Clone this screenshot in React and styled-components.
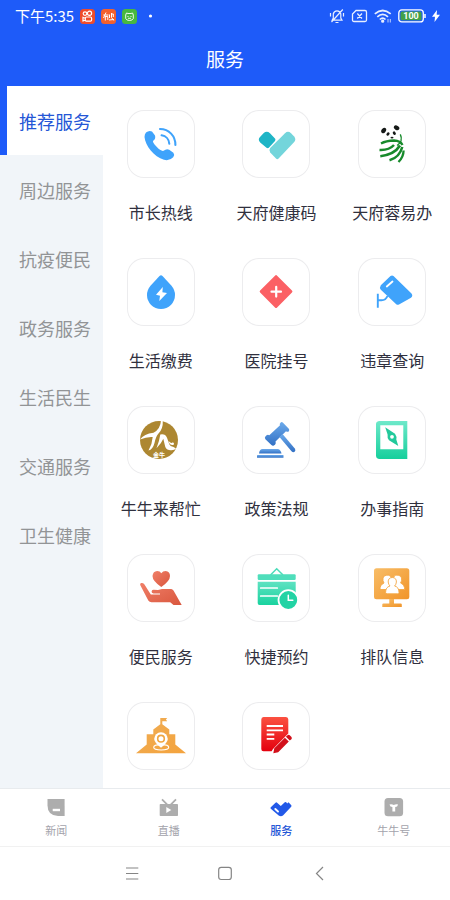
import React from "react";
import styled, { createGlobalStyle } from "styled-components";

const GlobalStyle = createGlobalStyle`
  *, *::before, *::after { box-sizing: border-box; }
  body {
    margin: 0;
    font-family: "Noto Sans CJK SC", "Noto Sans", sans-serif;
    background: #fff;
  }
  button { font: inherit; border: 0; background: none; padding: 0; cursor: pointer; }
  svg { display: block; flex-shrink: 0; }
`;

const Screen = styled.div`
  display: flex;
  flex-direction: column;
  height: 100vh;
  background: #fff;
`;

const Header = styled.header`
  flex-shrink: 0;
  background: #1e5bf9;
  color: #fff;
`;

const StatusBar = styled.div`
  display: flex;
  align-items: center;
  justify-content: space-between;
  height: 32px;
  padding: 0 10px 0 15px;
`;

const StatusGroup = styled.div`
  display: flex;
  align-items: center;
  gap: ${(p) => p.$gap}px;
`;

const Clock = styled.time`
  font-size: 15px;
  line-height: 20px;
`;

const Title = styled.h1`
  margin: 0;
  padding: 13px 0;
  text-align: center;
  font-size: 19px;
  line-height: 28px;
  font-weight: 400;
`;

const Body = styled.div`
  display: flex;
  flex: 1;
  min-height: 0;
`;

const Sidebar = styled.nav`
  width: 103px;
  flex-shrink: 0;
  background: #f1f5f9;
`;

const Category = styled.button`
  display: block;
  width: 100%;
  height: 69px;
  border-left: 7px solid ${(p) => (p.$active ? "#1e5bf9" : "transparent")};
  padding-left: 12px;
  text-align: left;
  white-space: nowrap;
  font-size: 18px;
  line-height: 26px;
  color: ${(p) => (p.$active ? "#2456d6" : "#929496")};
  background: ${(p) => (p.$active ? "#fff" : "transparent")};
`;

const Grid = styled.main`
  flex: 1;
  display: grid;
  grid-template-columns: repeat(3, 1fr);
  grid-auto-rows: 148px;
  padding-top: 24px;
  overflow-y: auto;
  scrollbar-width: none;
`;

const Service = styled.button`
  display: flex;
  flex-direction: column;
  align-items: center;
  gap: 22px;
`;

const Tile = styled.span`
  border-radius: 17px;
  box-shadow: inset 0 0 0 1px #ececee;
`;

const ServiceName = styled.span`
  font-size: 16px;
  line-height: 24px;
  color: #30303e;
  white-space: nowrap;
`;

const TabBar = styled.nav`
  display: grid;
  grid-template-columns: repeat(4, 1fr);
  flex-shrink: 0;
  border-top: 1px solid #e8ebee;
`;

const Tab = styled.button`
  display: flex;
  flex-direction: column;
  align-items: center;
  padding: 7px 0 6px;
  font-size: 11px;
  line-height: 20px;
  font-weight: ${(p) => (p.$active ? 500 : 400)};
  color: ${(p) => (p.$active ? "#2456d6" : "#a3a3ab")};
`;

const SystemNav = styled.nav`
  display: flex;
  justify-content: center;
  align-items: center;
  gap: 69px;
  height: 54px;
  flex-shrink: 0;
  border-top: 1px solid #f1f1f1;
`;

const SystemButton = styled.button`
  width: 24px;
  height: 24px;
`;

const Gradient = ({ id, from, to, slant }) => (
  <defs>
    <linearGradient id={id} x1="0" y1="0" x2={slant ? 1 : 0} y2="1">
      <stop offset="0" stopColor={from} />
      <stop offset="1" stopColor={to} />
    </linearGradient>
  </defs>
);

const icons = {
  phone: (
    <>
      <path fill="#3fa3fb" d="M19 22.6Q22 20 25 21.5L28 25.6Q29 29 26.2 30.8Q25 32 29.4 36.6Q34 41.600 36.600 40.800Q39.500 38.200 42.200 39.700L46.400 42.800Q48 44.800 46.200 47.200Q42.500 51.200 37 49.800C27 46.800 18.200 35.500 17.500 27Q17.500 24.200 19 22.600Z" />
      <path fill="none" stroke="#3fa3fb" strokeWidth="2.100" strokeLinecap="round" d="M33 19C42 19 48.500 26 48.400 35M34.600 25.300C39 26 42 29.500 42.300 33.700" />
    </>
  ),
  health: (
    <>
      <path fill="#1fb5c6" d="M18 27L21.500 23.200Q24.700 20.500 28 23.200L33.200 28.700Q33.800 29.800 33 31L26.800 37.800Q25.800 38.600 24.500 37.700L18.200 32.500Q15.500 29.700 18 27Z" />
      <path fill="#73d5db" d="M28.200 38L43 23.200Q46 20.500 49 23.200L52.200 26.400Q54.400 29.300 52.200 32L36.600 48.600Q35.300 49.800 34 48.600L28.200 42.500Q26.500 40 28.200 38Z" />
    </>
  ),
  panda: (
    <>
      <g fill="#161a18">
        <ellipse cx="25.700" cy="20.500" rx="2.200" ry="2.900" transform="rotate(35 25.700 20.500)" />
        <ellipse cx="38.600" cy="17.800" rx="2.900" ry="2.200" transform="rotate(30 38.600 17.800)" />
        <ellipse cx="30" cy="24" rx="1.400" ry="1.900" transform="rotate(35 30 24)" />
        <ellipse cx="36.300" cy="23.200" rx="1.400" ry="1.900" transform="rotate(-35 36.300 23.200)" />
        <ellipse cx="34" cy="27.600" rx="1.500" ry="0.900" />
      </g>
      <g fill="none" stroke="#178a2b">
        <path strokeWidth="2.300" d="M23 33.500Q28 30.700 36 30.500Q42.500 30.700 44.500 35" />
        <path strokeWidth="1.400" d="M42.300 24.300Q43.800 27 43 31Q41.500 34 39 35.500" />
        <path strokeWidth="2.500" d="M21.500 40Q31 40.500 36 35" />
        <path strokeWidth="2.600" d="M22.300 46.200Q36.500 44.500 42 35.500" />
        <path strokeWidth="2.500" d="M31.500 50.300Q41.500 47.500 44.300 37" />
        <path strokeWidth="2.300" d="M40.500 52Q45.500 47 45.600 40.500" />
      </g>
    </>
  ),
  drop: (
    <>
      <path fill="#3fa3fb" d="M32.500 18Q34 16.600 35.500 18L44.500 27.800Q48 32 48 37A14 14 0 0 1 20 37Q20 32 23.500 27.800Z" />
      <path fill="#fff" d="M35.800 29L29 36.800L33 37.700L32.300 43L40 34.900L35.400 34.200Z" />
    </>
  ),
  hospital: (
    <>
      <rect x="22.050" y="21.550" width="24" height="24" rx="1.500" fill="#fb6064" transform="rotate(45 34.050 33.550)" />
      <path stroke="#fff" strokeWidth="2.200" strokeLinecap="round" d="M29.500 33.700H39M34.200 28.800V38.600" />
    </>
  ),
  camera: (
    <>
      <path fill="#3fa3fb" d="M32.500 18.100Q34 16.800 35.500 18L53.500 35.500Q55.300 38 53 39.700L41 46.500Q39.400 47.400 38 46L22.800 31.700Q21.300 29.500 22.800 27.200Z" />
      <path fill="none" stroke="#3fa3fb" strokeWidth="1.900" d="M19.800 35.700V49.800M20 42.300H23.500Q27.800 42.300 29.500 38" />
      <path stroke="#fff" strokeWidth="1.800" strokeLinecap="round" d="M28.800 28.500L34.500 23.500" />
    </>
  ),
  bull: (
    <>
      <circle cx="32" cy="34" r="19" fill="#ad8731" />
      <g fill="#fff">
        <path d="M34 14.500L35.800 14.500Q36.200 23 31.500 27.500Q29 30 27.500 37Q25.800 43.500 21.500 44.500Q25.300 38 25.700 31Q20 30.500 13 33.500Q17 27.800 26.500 26.800Q33.500 23 34 14.500Z" />
        <path d="M33.300 28.500Q38.300 27.500 40 31.800L42.300 38.300Q43 40.500 46.500 41L49 42.500Q47 45 42 44Q38.500 43.300 37.800 39L36.300 32.800Q34.500 37.500 29.500 42.200Q32.500 34.500 33.300 28.500Z" />
        <path d="M41.500 34.800Q43.500 38 46 36.300Q47.800 37.300 46.500 39Q42.500 39.800 41.500 34.800Z" />
        <text x="32" y="50.500" fontSize="6" fontWeight="700" textAnchor="middle">金牛</text>
      </g>
    </>
  ),
  gavel: (
    <>
      <Gradient id="blue" from="#6caaeb" to="#3270c4" />
      <g fill="url(#blue)">
        <path d="M38.500 16.700Q39.700 15.500 41 16.700L46.800 22.800Q47.900 24.200 46.700 25.400Q45.500 26.300 44 25.300L33.500 35.500Q34.300 37.200 33 38.700L31.800 39.600Q30.500 40.200 29.400 39L23.400 33.200Q22.300 31.800 23.400 30.500L24.600 29.300Q25.800 28.300 27.300 29.200L38 19.200Q37.200 17.800 38.500 16.700Z" />
        <path d="M37.500 31L40.500 28L53 42.700Q54 44.700 52.600 45.800Q51 46.700 49.500 45.200Z" />
        <path d="M17 47.500Q17.500 43 20.500 43H35.500Q38.500 43 39.500 47.500Z" />
        <rect x="15" y="49" width="26.500" height="2.800" rx="0.600" />
      </g>
    </>
  ),
  guide: (
    <>
      <Gradient id="mint" from="#6ee9ca" to="#16cf9c" />
      <path fill="url(#mint)" fillRule="evenodd" d="M21 15H49.300V53H21Q18 52.500 18 49.500V18Q18 15.500 21 15ZM22.300 19.300V43.300H45.300V19.300Z" />
      <path fill="#22c99b" fillRule="evenodd" d="M27.200 21.300L37 27.800Q39 30.500 38.300 33.500L40.300 40L31 34.200Q29 32 29.600 28.500ZM34 28.900A1.900 1.900 0 1 0 34 32.700A1.900 1.900 0 1 0 34 28.900Z" />
    </>
  ),
  care: (
    <>
      <Gradient id="coral" from="#f07f68" to="#d9573e" slant />
      <g fill="url(#coral)">
        <path d="M34.300 33Q25.500 27 25.500 22Q26 17.200 30.200 17Q33 17 34.300 19.300Q35.800 17 38.600 17Q43 17.500 43 22Q43 27 34.300 33Z" />
        <path d="M13.200 31Q12.700 29.300 14.200 29Q16 28.600 17.300 30.300L23.800 40.400H33V39.600H26.500Q24.300 39 24.600 37.200Q25 35.800 26.700 35.800L31 36L35 35H44.200Q45.500 35 46.500 36.600L54.700 51H46.500L43.200 48.300H24.500Q22.500 48.300 21.300 46.500Z" />
      </g>
    </>
  ),
  booking: (
    <>
      <Gradient id="teal" from="#5fe2c2" to="#19d39f" />
      <path d="M28.500 21L34.700 14.800L41 21" fill="none" stroke="#4bdcb9" strokeWidth="1.500" />
      <rect x="15.700" y="20.300" width="38" height="5.700" rx="1.200" fill="#4fdebb" />
      <path fill="url(#teal)" d="M15.700 27.700H53.700V51H17.500Q15.700 51 15.700 49Z" />
      <path stroke="#fff" strokeWidth="1.700" strokeLinecap="round" d="M18.700 34H35.300M18.700 42H35.300" />
      <circle cx="46.300" cy="46" r="9.800" fill="#22d3a4" stroke="#fff" strokeWidth="1.800" />
      <path fill="none" stroke="#fff" strokeWidth="1.500" strokeLinecap="round" d="M46.300 41.200V46.200H50.800" />
    </>
  ),
  queue: (
    <>
      <Gradient id="amber" from="#f8bd67" to="#f19428" slant />
      <g fill="url(#amber)">
        <rect x="16" y="14.300" width="35.300" height="31" rx="2.500" />
        <path d="M31.300 45H36V49.500H42.700Q43.800 49.500 43.800 50.600V53H24.300V50.600Q24.300 49.500 25.400 49.500H31.300Z" />
      </g>
      <g fill="#fff" stroke="#f4a846" strokeWidth="0.900">
        <path d="M28.300 21.300A3.600 3.600 0 0 1 31 28Q33.500 30 32 35.500H22Q21.800 31 26 29Q24.500 27 25 24Q25.800 21.300 28.300 21.300Z" />
        <path d="M40.300 21.300A3.600 3.600 0 0 0 37.600 28Q35 30 36.600 35.500H46.600Q46.800 31 42.600 29Q44 27 43.600 24Q42.800 21.300 40.300 21.300Z" />
        <path d="M34.300 23.500Q38.500 23.700 38.400 28Q38.200 30.500 36.600 32Q41 33 41 38.500Q41 39.800 39.500 39.800H29.100Q27.600 39.800 27.600 38.500Q27.600 33 32 32Q30.400 30.500 30.200 28Q30.100 23.700 34.300 23.500Z" />
      </g>
    </>
  ),
  place: (
    <>
      <Gradient id="gold" from="#efad55" to="#f4a33d" slant />
      <path fill="url(#gold)" d="M33.300 16H40.200L38.900 17.600L40.200 19.300H35.300V22.300L42.300 27.500V32.300H48.300V42.500L59 51.300H9L19.700 42.500V32.300H26.300V27.500L33.300 22.300Z" />
      <ellipse cx="34.200" cy="45.300" rx="7.500" ry="2.700" fill="none" stroke="#fff" strokeWidth="1.100" />
      <path fill="#fff" d="M34 45.800Q27.200 40.500 27.200 37A6.800 6.800 0 0 1 40.800 37Q40.800 40.500 34 45.800Z" />
      <circle cx="34" cy="36.700" r="3.300" fill="#fff" stroke="#f0a642" strokeWidth="1.600" />
    </>
  ),
  write: (
    <>
      <Gradient id="red" from="#fb5141" to="#e4000e" />
      <path fill="url(#red)" d="M21.500 15H44Q46.300 15 46.300 17.500V31.500L31 47L29.600 49.200H21.500Q19.300 49.200 19.300 47V17.500Q19.300 15 21.500 15Z" />
      <path stroke="#fff" strokeWidth="1.800" d="M24.700 24H41M24.700 28.300H41M24.700 32.500H32.300M24.700 36.800H32.300" />
      <path fill="#d2101b" d="M31.300 51.300L32.300 46.300L42.900 35.800L46.800 39.600L36.200 50.200ZM43.900 34.700L45.500 33.200Q46.800 32.300 48 33.500L49.500 35Q50.300 36.200 49.400 37.200L47.800 38.600Z" />
    </>
  ),
};

const services = [
  { name: "市长热线", icon: "phone" },
  { name: "天府健康码", icon: "health" },
  { name: "天府蓉易办", icon: "panda" },
  { name: "生活缴费", icon: "drop" },
  { name: "医院挂号", icon: "hospital" },
  { name: "违章查询", icon: "camera" },
  { name: "牛牛来帮忙", icon: "bull" },
  { name: "政策法规", icon: "gavel" },
  { name: "办事指南", icon: "guide" },
  { name: "便民服务", icon: "care" },
  { name: "快捷预约", icon: "booking" },
  { name: "排队信息", icon: "queue" },
  { label: "地点", icon: "place" },
  { label: "填写", icon: "write" },
];

const categories = ["推荐服务", "周边服务", "抗疫便民", "政务服务", "生活民生", "交通服务", "卫生健康"];

const tabs = [
  {
    name: "新闻",
    icon: (
      <>
        <path fill="#adadad" d="M3.500 3H20.600V20H14Q3.500 19.500 3.500 9.500Z" />
        <path stroke="#fff" strokeWidth="2.400" d="M8.700 14H16" />
      </>
    ),
  },
  {
    name: "直播",
    icon: (
      <>
        <path fill="none" stroke="#adadad" strokeWidth="1.800" d="M5 3.300L10.500 8.800M19 3.300L13.500 8.800" />
        <rect x="2.700" y="8" width="18.300" height="12" rx="0.800" fill="#adadad" />
        <path fill="#fff" d="M9.300 11L14.300 14L9.300 17Z" />
      </>
    ),
  },
  {
    name: "服务",
    active: true,
    icon: (
      <>
        <path fill="#2259e8" d="M1.800 12.800Q1 12 1.800 11.200L6.500 6.700Q7.300 6 8.100 6.700L11.800 10L15.800 6.300Q16.500 5.700 17.200 6.300L18.200 7.400L19.500 6.300L22.300 9.200Q22.800 10 22.200 10.700L14 19.500Q12.300 20.800 10 19.800Z" />
        <path stroke="#fff" strokeWidth="1.900" strokeLinecap="round" d="M6.300 13L9 15.500" />
      </>
    ),
  },
  {
    name: "牛牛号",
    icon: (
      <>
        <rect x="2.500" y="2" width="18.600" height="18.200" rx="3.500" fill="#adadad" />
        <path fill="#fff" d="M7.500 8.500Q10 8 11.800 9Q13.600 8 16.100 8.500Q15.500 11 13.200 11V15.500H10.400V11Q8 11 7.500 8.500Z" />
      </>
    ),
  },
];

const systemButtons = [
  ["菜单", "M6 6H18.300M6 11.500H18.300M6 17H18.300"],
  ["主页", "M8.200 5.300H15.800Q18.300 5.300 18.300 7.800V15Q18.300 17.500 15.800 17.500H8.200Q5.700 17.500 5.700 15V7.800Q5.700 5.300 8.200 5.300Z"],
  ["返回", "M17 5L10.500 11.500L17 18"],
];

const AppBadge = ({ color, children }) => (
  <svg width="15" height="15" viewBox="0 0 15 15" aria-hidden="true">
    <rect width="15" height="15" rx="3.500" fill={color} />
    <g fill="none" stroke="#fff" strokeWidth="1.200">{children}</g>
  </svg>
);

const Status = () => (
  <StatusBar>
    <StatusGroup $gap={6}>
      <Clock>下午5:35</Clock>
      <AppBadge color="#ef4c2b">
        <circle cx="5" cy="4.600" r="1.800" />
        <circle cx="9.500" cy="4.300" r="2.100" />
        <rect x="5.300" y="8" width="6.300" height="4.200" rx="1.200" />
        <path d="M5.300 9.200L3 8.300V12L5.300 11.200" />
      </AppBadge>
      <AppBadge color="#f4602d">
        <path strokeWidth="1" d="M2.300 6H7.500M5 3.500L2.500 9M4.300 7V11.500M4.300 7.500H6.800V11M8.500 5.500V9M8 11L13 10.500M10.500 4V8.500L12.800 11.500M10.500 5H12.300V8" />
      </AppBadge>
      <AppBadge color="#48b83f">
        <path strokeWidth="0.900" d="M4.500 4L6 4.500H9L10.500 4L11.300 6V9.500Q10.500 11.500 7.500 11.500Q4.500 11.500 3.700 9.500V6ZM5.500 7.500H6.500M8.500 7.500H9.500M6 9.300H9" />
      </AppBadge>
      <svg width="16" height="14" viewBox="0 0 16 14" aria-hidden="true">
        <circle cx="7.500" cy="7" r="1.600" fill="#fff" />
      </svg>
    </StatusGroup>
    <StatusGroup $gap={6}>
      <svg width="16" height="16" viewBox="0 0 16 16" fill="none" stroke="#e7eeff" strokeWidth="1.200" aria-hidden="true">
        <path d="M3.200 12.200H13L11.800 10V6Q11 2.800 8 2.800Q5 2.800 4.300 6V10ZM6.500 14.500H9.500M13.800 1.500L2.500 14M1.500 5V8.500M14.500 5V8.500" />
      </svg>
      <svg width="17" height="16" viewBox="0 0 17 16" fill="none" stroke="#e7eeff" strokeWidth="1.300" aria-hidden="true">
        <path d="M5 2.500H14Q15.500 2.500 15.500 4V12Q15.500 13.500 14 13.500H3Q1.500 13.500 1.500 12V6ZM6.300 5.500L11 10.500M11 5.500L6.300 10.500" />
      </svg>
      <svg width="18" height="16" viewBox="0 0 18 16" fill="none" stroke="#e7eeff" strokeWidth="1.700" aria-hidden="true">
        <path d="M0.800 5.800Q8.700 -0.800 16.700 5.800M3.300 8.800Q8.700 4 14 8.800M5.800 11.500Q8.700 8.700 11.500 11.500" />
        <circle cx="8.700" cy="13.200" r="0.800" />
        <path strokeWidth="0.800" d="M14 11V14.500M16.300 11V14.500" />
      </svg>
      <svg width="28" height="14" viewBox="0 0 28 14" aria-hidden="true">
        <rect x="0.800" y="0.900" width="24.500" height="12" rx="3" fill="none" stroke="#fff" strokeWidth="1.300" />
        <rect x="2.500" y="2.600" width="21" height="8.600" rx="1.500" fill="#43a047" />
        <path stroke="#fff" strokeWidth="1.500" d="M27 5V9" />
        <text x="13" y="10" fill="#fff" fontFamily="Roboto, sans-serif" fontSize="9" fontWeight="700" textAnchor="middle">100</text>
      </svg>
      <svg width="8" height="14" viewBox="0 0 8 14" aria-hidden="true">
        <path fill="#fff" d="M5 1L0 7.800H3L2.500 13L8 5.800H4.700Z" />
      </svg>
    </StatusGroup>
  </StatusBar>
);

export default function App() {
  return (
    <Screen>
      <GlobalStyle />
      <Header>
        <Status />
        <Title>服务</Title>
      </Header>
      <Body>
        <Sidebar>
          {categories.map((name, i) => (
            <Category key={name} $active={i === 0}>{name}</Category>
          ))}
        </Sidebar>
        <Grid>
          {services.map(({ name, label, icon }) => (
            <Service key={icon} aria-label={label}>
              <Tile>
                <svg width="68" height="68" viewBox="0 0 68 68" aria-hidden="true">{icons[icon]}</svg>
              </Tile>
              <ServiceName>{name}</ServiceName>
            </Service>
          ))}
        </Grid>
      </Body>
      <TabBar>
        {tabs.map((tab) => (
          <Tab key={tab.name} $active={tab.active}>
            <svg width="24" height="24" viewBox="0 0 24 24" aria-hidden="true">{tab.icon}</svg>
            {tab.name}
          </Tab>
        ))}
      </TabBar>
      <SystemNav>
        {systemButtons.map(([label, d]) => (
          <SystemButton key={label} aria-label={label}>
            <svg width="24" height="24" viewBox="0 0 24 24" fill="none" stroke="#858585" strokeWidth="1.200" aria-hidden="true">
              <path d={d} />
            </svg>
          </SystemButton>
        ))}
      </SystemNav>
    </Screen>
  );
}
